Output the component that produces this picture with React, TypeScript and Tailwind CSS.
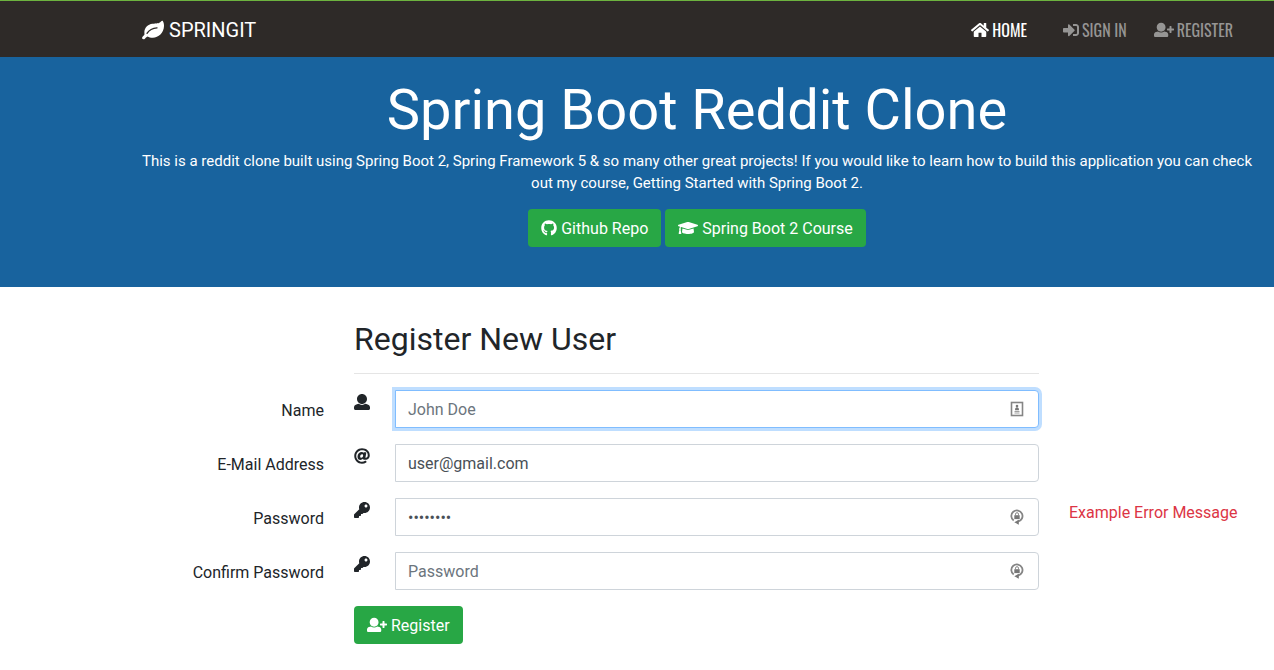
import type { InputHTMLAttributes, ReactNode } from "react";
import { FaAt, FaGithub, FaGraduationCap, FaKey, FaSignInAlt } from "react-icons/fa";

const USER_PATH =
  "M256 0c88.366 0 160 71.634 160 160s-71.634 160-160 160S96 248.366 96 160 167.634 0 256 0zm183.283 333.821l-71.313-17.828c-74.923 53.89-165.738 41.864-223.94 0l-71.313 17.828C29.981 344.505 0 382.903 0 426.955V464c0 26.51 21.49 48 48 48h416c26.51 0 48-21.49 48-48v-37.045c0-44.052-29.981-82.45-72.717-93.134z";

function UserIcon() {
  return (
    <svg viewBox="0 0 512 512" className="size-4" fill="currentColor" aria-hidden="true">
      <path d={USER_PATH} />
    </svg>
  );
}

function UserPlusIcon() {
  return (
    <svg viewBox="0 0 640 512" className="h-4 w-5 shrink-0" fill="currentColor" aria-hidden="true">
      <path transform="translate(0 24) scale(.89)" d={USER_PATH} />
      <path d="M640 224v32c0 8.800-7.200 16-16 16h-64v64c0 8.800-7.200 16-16 16h-32c-8.800 0-16-7.200-16-16v-64h-64c-8.800 0-16-7.200-16-16v-32c0-8.800 7.200-16 16-16h64v-64c0-8.800 7.200-16 16-16h32c8.800 0 16 7.200 16 16v64h64c8.800 0 16 7.200 16 16z" />
    </svg>
  );
}

function HomeIcon() {
  return (
    <svg viewBox="0 0 576 512" className="h-4 w-[18px] shrink-0" fill="currentColor" aria-hidden="true">
      <path d="M488 312.7V456c0 13.3-10.7 24-24 24H348c-6.6 0-12-5.4-12-12V356c0-6.6-5.4-12-12-12h-72c-6.6 0-12 5.4-12 12v112c0 6.6-5.4 12-12 12H112c-13.3 0-24-10.7-24-24V312.7c0-3.6 1.6-7 4.4-9.3l188-154.8c4.4-3.6 10.8-3.6 15.3 0l188 154.8c2.7 2.3 4.3 5.7 4.3 9.3zm83.6-60.9L488 182.9V44.4c0-6.6-5.4-12-12-12h-56c-6.6 0-12 5.4-12 12V117l-89.5-73.7c-17.7-14.6-43.3-14.6-61 0L4.4 251.8c-5.1 4.2-5.8 11.8-1.6 16.9l25.5 31c4.2 5.1 11.8 5.8 16.9 1.6l235.2-193.7c4.4-3.6 10.8-3.6 15.3 0l235.2 193.7c5.1 4.2 12.7 3.5 16.9-1.6l25.5-31c4.2-5.2 3.4-12.7-1.7-16.9z" />
    </svg>
  );
}

function LeafIcon() {
  return (
    <svg viewBox="0 0 23 20" className="h-5 w-[23px] shrink-0" fill="currentColor" aria-hidden="true">
      <path d="M20.800 1c.8 1.300 1.300 3 1.200 5-.2 7-5.500 11.700-11.200 11.700-2.200 0-3.800-.6-5.300-1.300-1.200.7-1.900 1.500-2.600 2.300-.8.9-2.200.8-2.700-.1-.5-1 .3-1.900 1.300-2.900.6-.6.9-.9 1-1.500C1.600 8.500 5.300 4.500 10.500 3.800c3.700-.5 6.500.1 8.500-2.300.6-.8 1.400-1.100 1.800-.5z" />
      <path d="M5 13.300c2.300-3.300 5-4.900 10-5.400" fill="none" stroke="#2e2a28" strokeWidth="1.400" strokeLinecap="round" />
    </svg>
  );
}

function IdentityBadge() {
  return (
    <svg viewBox="0 0 14 16" className="h-4 w-3.5" fill="none" aria-hidden="true">
      <rect x="1.500" y="1.500" width="11" height="13" stroke="#858585" strokeWidth="1.600" />
      <circle cx="7" cy="5" r="1.300" fill="#777" />
      <path d="M5 9.200c0-2 .8-2.900 2-2.900s2 .9 2 2.900z" fill="#777" />
      <path d="M4.500 10.500h5M4.500 12h5" stroke="#a0a0a0" />
    </svg>
  );
}

function LockBadge() {
  return (
    <svg viewBox="0 0 14 16" className="h-4 w-3.5" fill="none" aria-hidden="true">
      <path d="M3.700 11.600A5.600 5.600 0 1 1 8 12.500" stroke="#858585" strokeWidth="1.800" />
      <path d="M8.800 10.800v5L4.300 13.300z" fill="#777" />
      <rect x="4.300" y="6.200" width="5.400" height="3.900" fill="#777" />
      <path d="M5.500 6.400V5.200a1.500 1.500 0 0 1 3 0v1.200" stroke="#858585" />
    </svg>
  );
}

type NavItemProps = { icon: ReactNode; label: string; active?: boolean };

function NavItem({ icon, label, active }: NavItemProps) {
  return (
    <a
      href="#"
      className={`flex items-center gap-[3px] font-['Oswald','Roboto_Condensed','Liberation_Sans_Narrow',sans-serif] ${
        active ? "mr-[9px] text-white" : "text-[#969594]"
      }`}
    >
      {icon}
      {label}
    </a>
  );
}

const buttonClass =
  "inline-flex h-[38px] items-center gap-1 rounded-sm bg-[#28a745] px-[13px] text-base whitespace-nowrap text-white hover:bg-[#218838]";

type FieldProps = InputHTMLAttributes<HTMLInputElement> & {
  id: string;
  label: string;
  icon: ReactNode;
  badge?: ReactNode;
  error?: string;
  highlighted?: boolean;
};

function Field({ id, label, icon, badge, error, highlighted, ...input }: FieldProps) {
  return (
    <div className="mb-4 grid grid-cols-[339fr_715fr_220fr]">
      <label htmlFor={id} className="px-[15px] pt-[9px] text-right leading-6">
        {label}
      </label>
      <div className="flex px-[15px]">
        <span className="w-[41px] shrink-0 pt-1">{icon}</span>
        <div className="relative grow">
          <input
            id={id}
            {...input}
            className={`block h-[38px] w-full rounded-r-sm border bg-white px-3 text-base text-[#495057] outline-none placeholder:text-[#6c757d] ${
              highlighted ? "border-[#80bdff] ring-3 ring-[#bfdeff]" : "border-[#ced4da]"
            }`}
          />
          {badge && <span className="pointer-events-none absolute inset-y-0 right-[15px] flex items-center">{badge}</span>}
        </div>
      </div>
      {error && <p className="px-[15px] pt-[3px] leading-6 text-[#dc3545]">{error}</p>}
    </div>
  );
}

export default function App() {
  return (
    <div className="min-h-screen bg-white font-['Roboto',sans-serif] text-base text-[#212529]">
      <header className="flex h-[57px] items-center justify-between border-t border-[#6db33f] bg-[#2e2a28] pt-px pr-[41px] pl-[142px]">
        <a href="#" className="flex items-center gap-1 text-xl text-white">
          <LeafIcon />
          SPRINGIT
        </a>
        <nav className="flex items-center gap-[27px]">
          <NavItem icon={<HomeIcon />} label="HOME" active />
          <NavItem icon={<FaSignInAlt className="size-4 shrink-0" />} label="SIGN IN" />
          <NavItem icon={<UserPlusIcon />} label="REGISTER" />
        </nav>
      </header>

      <section className="bg-[#18639e] pt-5 pr-[22px] pb-10 pl-[142px] text-center text-white">
        <h1 className="mb-[6px] text-[56px] leading-[67px]">Spring Boot Reddit Clone</h1>
        <p className="mb-[15px] text-[15px] leading-[22px]">
          This is a reddit clone built using Spring Boot 2, Spring Framework 5 &amp; so many other great projects! If you
          would like to learn how to build this application you can check out my course, Getting Started with Spring Boot
          2.
        </p>
        <div className="flex justify-center gap-1">
          <a href="#" className={buttonClass}>
            <FaGithub className="size-4 shrink-0" aria-hidden="true" />
            <span className="pt-[2px]">Github Repo</span>
          </a>
          <a href="#" className={buttonClass}>
            <FaGraduationCap className="h-4 w-5 shrink-0" aria-hidden="true" />
            <span className="pt-[2px]">Spring Boot 2 Course</span>
          </a>
        </div>
      </section>

      <form className="pt-[33px]" onSubmit={(event) => event.preventDefault()}>
        <div className="mb-4 grid grid-cols-[339fr_715fr_220fr]">
          <div className="col-start-2 px-[15px]">
            <h2 className="border-b border-[#e5e5e5] pb-[15px] text-[32px] leading-[38px]">Register New User</h2>
          </div>
        </div>
        <Field id="name" label="Name" icon={<UserIcon />} placeholder="John Doe" badge={<IdentityBadge />} highlighted />
        <Field id="email" label="E-Mail Address" icon={<FaAt className="size-4" />} type="email" defaultValue="user@gmail.com" />
        <Field
          id="password"
          label="Password"
          icon={<FaKey className="size-4" />}
          type="password"
          defaultValue="password"
          badge={<LockBadge />}
          error="Example Error Message"
        />
        <Field
          id="confirm-password"
          label="Confirm Password"
          icon={<FaKey className="size-4" />}
          type="password"
          placeholder="Password"
          badge={<LockBadge />}
        />
        <div className="grid grid-cols-[339fr_715fr_220fr]">
          <div className="col-start-2 px-[15px]">
            <button type="submit" className={buttonClass}>
              <UserPlusIcon />
              <span className="pt-[2px]">Register</span>
            </button>
          </div>
        </div>
      </form>
    </div>
  );
}
